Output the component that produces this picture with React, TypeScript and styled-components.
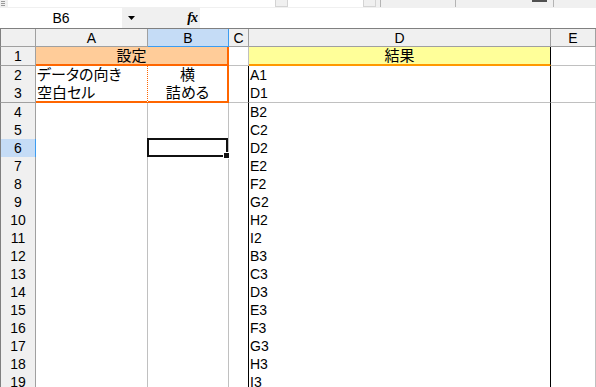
import React from 'react'
import styled, { createGlobalStyle } from 'styled-components'

const GRID = '#c0c0c0'
const HEAD_LINE = '#a0a0a0'
const SEL_BG = '#c5dcf6'
const SEL_LINE = '#3c9cf0'
const ORANGE = '#ff6600'

const results = ['結果', 'A1', 'D1', 'B2', 'C2', 'D2', 'E2', 'F2', 'G2', 'H2', 'I2', 'B3', 'C3', 'D3', 'E3', 'F3', 'G3', 'H3', 'I3']
const rowHeight = (n: number) => (n === 1 || n === 3 ? 19 : 18)

const GlobalStyle = createGlobalStyle`
  html, body {
    margin: 0;
    padding: 0;
    background: #fff;
    overflow: hidden;
  }
  body {
    font-family: "Liberation Sans", "Noto Sans CJK JP", sans-serif;
    font-size: 14px;
    color: #000;
  }
`

export default function App() {
  return (
    <Window>
      <GlobalStyle />
      <Strip>
        <Grip>
          <svg width="8" height="8" viewBox="0 0 8 8">
            <path d="M1 1.5h4M1 3.5h4M1 5.5h4" stroke="#9a9a9a" strokeWidth="1" />
          </svg>
        </Grip>
        <StripField $w={267} />
        <StripKnob />
        <StripField $w={75} />
        <StripKnob />
        <StripDivider $gap={4} />
        <StripDivider $gap={74} />
        <StripBlock />
        <StripDivider $gap={6} />
      </Strip>

      <FormulaBar>
        <NameBox>B6</NameBox>
        <BarTools>
          <svg width="8" height="4" viewBox="0 0 8 4">
            <path d="M0 0h7L3.5 4z" fill="#000" />
          </svg>
          <Fx>fx</Fx>
        </BarTools>
        <FormulaInput />
      </FormulaBar>

      <Sheet>
        <Row $h={18}>
          <Corner />
          <HeadCell>A</HeadCell>
          <HeadCell $sel>B</HeadCell>
          <HeadCell>C</HeadCell>
          <HeadCell>D</HeadCell>
          <HeadCell>E</HeadCell>
        </Row>

        {results.map((value, i) => {
          const n = i + 1
          return (
            <Row key={n} $h={rowHeight(n)}>
              <RowHead $sel={n === 6}>{n}</RowHead>
              {n === 1 && (
                <Cell $span={2} $bg="#ffcc99" $center $jp $right={`2px solid ${ORANGE}`} $bottom={`2px solid ${ORANGE}`}>
                  設定
                </Cell>
              )}
              {n === 2 && (
                <>
                  <Cell $jp $right={`1px dotted ${ORANGE}`} $bottom={`1px solid ${ORANGE}`}>
                    データの向き
                  </Cell>
                  <Cell $jp $center $right={`2px solid ${ORANGE}`} $bottom={`1px solid ${ORANGE}`}>
                    横
                  </Cell>
                </>
              )}
              {n === 3 && (
                <>
                  <Cell $jp $right={`1px dotted ${ORANGE}`} $bottom={`2px solid ${ORANGE}`}>
                    空白セル
                  </Cell>
                  <Cell $jp $center $right={`2px solid ${ORANGE}`} $bottom={`2px solid ${ORANGE}`}>
                    詰める
                  </Cell>
                </>
              )}
              {n > 3 && (
                <>
                  <Cell />
                  <Cell>
                    {n === 6 && (
                      <Selection>
                        <FillHandle />
                      </Selection>
                    )}
                  </Cell>
                </>
              )}
              <Cell $right={n > 1 ? '1px solid #000' : undefined} />
              {n === 1 ? (
                <Cell $bg="#ffff99" $center $jp $right="1px solid #000" $bottom="2px solid #ff9900">
                  {value}
                </Cell>
              ) : (
                <Cell $right="1px solid #000">{value}</Cell>
              )}
              <Cell />
            </Row>
          )
        })}
      </Sheet>
    </Window>
  )
}

const Window = styled.div`
  width: 596px;
  height: 387px;
  overflow: hidden;
  background: #fff;
`

const Strip = styled.div`
  display: flex;
  height: 8px;
  background: #f0f0f0;
`

const Grip = styled.div`
  width: 8px;
  display: flex;
`

const StripField = styled.div<{ $w: number }>`
  width: ${p => p.$w}px;
  height: 7px;
  background: #fff;
`

const StripKnob = styled.div`
  box-sizing: border-box;
  width: 13px;
  height: 7px;
  background: #f0f0f0;
  border: 1px solid #d4d4d4;
  border-top: none;
`

const StripDivider = styled.div<{ $gap: number }>`
  margin-left: ${p => p.$gap}px;
  width: 1px;
  height: 7px;
  background: #b4b4b4;
`

const StripBlock = styled.div`
  margin-left: 76px;
  width: 15px;
  height: 2px;
  background: #505050;
`

const FormulaBar = styled.div`
  display: flex;
  height: 20px;
  line-height: 20px;
`

const NameBox = styled.div`
  width: 122px;
  background: #fff;
  text-align: center;
`

const BarTools = styled.div`
  width: 78px;
  display: flex;
  align-items: center;
  justify-content: space-between;
  padding: 0 3px 0 6px;
  box-sizing: border-box;
  background: #f0f0f0;
`

const Fx = styled.span`
  font-family: "Liberation Serif", serif;
  font-style: italic;
  font-weight: bold;
  font-size: 14px;
  letter-spacing: -1px;
`

const FormulaInput = styled.div`
  flex: 1;
  background: #fff;
`

const Sheet = styled.div`
  border-top: 1px solid #808080;
`

const Row = styled.div<{ $h: number }>`
  display: grid;
  grid-template-columns: 36px 112px 81px 20px 302px 1fr;
  height: ${p => p.$h}px;
`

const Corner = styled.div`
  box-sizing: border-box;
  background: #f0f0f0;
  border-left: 1px solid #808080;
  border-right: 1px solid ${HEAD_LINE};
  border-bottom: 1px solid ${HEAD_LINE};
`

const HeadCell = styled.div<{ $sel?: boolean }>`
  box-sizing: border-box;
  background: ${p => (p.$sel ? SEL_BG : '#f0f0f0')};
  border-right: 1px solid ${p => (p.$sel ? SEL_LINE : HEAD_LINE)};
  border-bottom: 1px solid ${p => (p.$sel ? SEL_LINE : HEAD_LINE)};
  text-align: center;
  line-height: 17px;
  padding-top: 1px;
  overflow: hidden;
`

const RowHead = styled(HeadCell)`
  border-left: 1px solid #808080;
  border-bottom: 1px solid ${HEAD_LINE};
`

const Cell = styled.div<{
  $bg?: string
  $center?: boolean
  $jp?: boolean
  $right?: string
  $bottom?: string
  $span?: number
}>`
  box-sizing: border-box;
  position: relative;
  grid-column: span ${p => p.$span ?? 1};
  background: ${p => p.$bg ?? '#fff'};
  border-right: ${p => p.$right ?? `1px solid ${GRID}`};
  border-bottom: ${p => p.$bottom ?? `1px solid ${GRID}`};
  padding: ${p => (p.$jp ? '0 1px' : '1px 1px 0')};
  text-align: ${p => (p.$center ? 'center' : 'left')};
  line-height: ${p => (p.$jp ? 16 : 17)}px;
  white-space: nowrap;
  font-family: ${p => (p.$jp ? '"Noto Sans CJK JP", sans-serif' : 'inherit')};
  font-size: ${p => (p.$jp ? 15 : 14)}px;
  font-feature-settings: "palt";
`

const Selection = styled.div`
  position: absolute;
  left: -1px;
  top: -1px;
  right: 0;
  bottom: 0;
  border: 2px solid #111;
  z-index: 2;
`

const FillHandle = styled.div`
  position: absolute;
  right: -4px;
  bottom: -4px;
  width: 5px;
  height: 5px;
  background: #111;
  border: 1px solid #fff;
`
